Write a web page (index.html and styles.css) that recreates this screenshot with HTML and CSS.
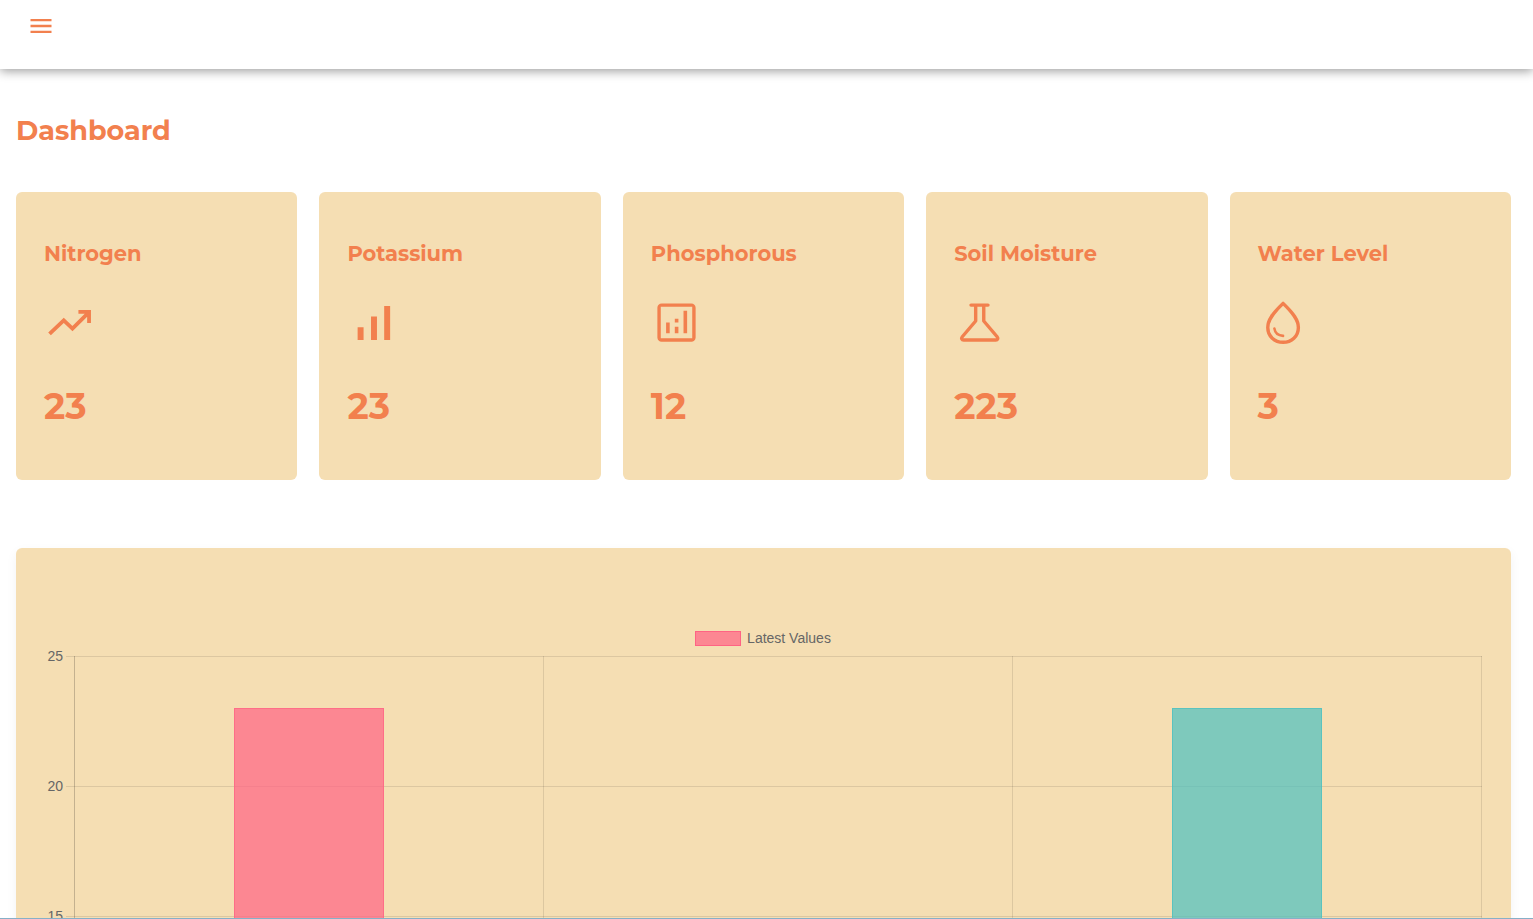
FILE: index.html
```html
<!DOCTYPE html>
<html lang="en">
<head>
<meta charset="utf-8">
<title>Dashboard</title>
<link rel="stylesheet" href="styles.css">
</head>
<body>
<div class="app">
  <header class="topbar">
    <button class="menu-button" type="button" aria-label="Open menu">
      <svg viewBox="0 0 24 24" aria-hidden="true"><path d="M3 18h18v-2H3v2zm0-5h18v-2H3v2zm0-7v2h18V6H3z"/></svg>
    </button>
  </header>
  <main class="content">
    <h1 class="page-title">Dashboard</h1>
    <section class="cards" aria-label="Sensor values">
      <article class="card">
        <h2 class="card-label">Nitrogen</h2>
        <svg class="card-icon" viewBox="0 0 24 24" aria-hidden="true"><path class="stroke sharp" d="M2.600 17.400L9.300 11l4.100 3.900L21.100 7.200M16.200 7h5v5.200"/></svg>
        <p class="card-value">23</p>
      </article>
      <article class="card">
        <h2 class="card-label">Potassium</h2>
        <svg class="card-icon" viewBox="0 0 24 24" aria-hidden="true"><path d="M5 14.200h2.800v6H5zM11.300 9.200h2.800v11h-2.800zM17.500 4.200h2.800v16h-2.800z"/></svg>
        <p class="card-value">23</p>
      </article>
      <article class="card">
        <h2 class="card-label">Phosphorous</h2>
        <svg class="card-icon" viewBox="0 0 24 24" aria-hidden="true"><path d="M19 3H5c-1.100 0-2 .9-2 2v14c0 1.100.9 2 2 2h14c1.100 0 2-.9 2-2V5c0-1.100-.9-2-2-2zm.4 16.400H4.600V4.600h14.800v14.800zM7.100 12h1.700v5H7.100zM15.300 6.500H17V17h-1.700zM11.200 14h1.700v3h-1.700zM11.200 10.200h1.700V12h-1.700z"/></svg>
        <p class="card-value">12</p>
      </article>
      <article class="card">
        <h2 class="card-label">Soil Moisture</h2>
        <svg class="card-icon" viewBox="0 0 24 24" aria-hidden="true"><path class="stroke" d="M8 3.800h8M10.200 3.800v7.500L3.900 18.700c-.6.8-.2 1.500.6 1.500h15.200c.8 0 1.200-.7.6-1.500L14 11.300V3.800"/></svg>
        <p class="card-value">223</p>
      </article>
      <article class="card">
        <h2 class="card-label">Water Level</h2>
        <svg class="card-icon" viewBox="0 0 24 24" aria-hidden="true"><path class="stroke" d="M11.800 3C6.900 7.700 4.600 10.900 4.600 14.300c0 4.200 3.200 7 7.200 7s7.200-2.800 7.200-7C19 10.900 16.700 7.700 11.800 3z"/><path class="stroke thin" d="M7.700 14.800c.3 2.200 1.900 3.400 4.100 3.500"/></svg>
        <p class="card-value">3</p>
      </article>
    </section>
    <section class="chart-panel" aria-label="Latest values chart">
      <div class="legend"><span class="legend-box"></span>Latest Values</div>
      <div class="chart">
        <ol class="axis">
          <li>25</li><li>20</li><li>15</li><li>10</li><li>5</li><li>0</li>
        </ol>
        <div class="ticks"></div>
        <div class="plot">
          <div class="column"><div class="bar bar-pink" style="height:92%"></div></div>
          <div class="column"><div class="bar bar-blue" style="height:48%"></div></div>
          <div class="column"><div class="bar bar-teal" style="height:92%"></div></div>
        </div>
      </div>
    </section>
  </main>
</div>
</body>
</html>
```

FILE: styles.css
```css
:root {
  --accent: #f2804e;
  --panel: #f5deb3;
  --line: rgba(0, 0, 0, 0.1);
  --step: 130px;
}

* {
  box-sizing: border-box;
}

body {
  margin: 0;
  background: #fff;
  color: var(--accent);
  font-family: Montserrat, Inter, sans-serif;
}

.app {
  display: flex;
  flex-direction: column;
  height: 100vh;
  border-bottom: 1px solid #86b0c8;
}

.topbar {
  flex: none;
  z-index: 1;
  padding: 12px 27px 29px;
  box-shadow: 0 2px 10px rgba(0, 0, 0, 0.4);
}

.menu-button {
  display: block;
  padding: 0;
  border: 0;
  background: none;
  color: inherit;
  cursor: pointer;
}

.menu-button svg {
  display: block;
  width: 28px;
  height: 28px;
  fill: currentColor;
}

.content {
  flex: 1;
  min-height: 0;
  padding: 44px 22px 44px 16px;
  overflow-y: auto;
  scrollbar-width: none;
}

.page-title {
  margin: 0 0 44px;
  font-size: 27px;
  line-height: 35px;
  font-weight: 700;
}

.cards {
  display: grid;
  grid-template-columns: repeat(5, 1fr);
  gap: 22px;
  margin-bottom: 68px;
}

.card {
  padding: 48px 28px 52px;
  border-radius: 6px;
  background: var(--panel);
}

.card-label {
  margin: 0 0 29px;
  font-size: 21px;
  line-height: 28px;
  font-weight: 700;
}

.card-icon {
  display: block;
  width: 51px;
  height: 51px;
  margin-bottom: 36px;
  fill: currentColor;
}

.stroke {
  fill: none;
  stroke: currentColor;
  stroke-width: 1.6;
  stroke-linecap: round;
  stroke-linejoin: round;
}

.sharp {
  stroke-width: 1.8;
  stroke-linecap: butt;
  stroke-linejoin: miter;
}

.thin {
  stroke-width: 1.2;
}

.card-value {
  margin: 0;
  font-size: 36px;
  line-height: 44px;
  font-weight: 700;
}

.chart-panel {
  padding: 80px 29px 28px 28px;
  border-radius: 6px;
  background: var(--panel);
  box-shadow: 0 4px 12px rgba(0, 0, 0, 0.05);
  color: #666;
  font: 14px/20px "Liberation Sans", Arial, sans-serif;
}

.legend {
  display: flex;
  align-items: center;
  justify-content: center;
  gap: 6px;
  margin-bottom: 8px;
}

.legend-box {
  width: 46px;
  height: 15px;
  border: 1px solid #ff6384;
  background: rgba(255, 99, 132, 0.7);
}

.chart {
  display: grid;
  grid-template-columns: 22px 8px 1fr;
}

.axis {
  margin: -10px 0 0;
  padding: 0 3px 0 0;
  list-style: none;
  text-align: right;
}

.axis li {
  height: var(--step);
}

.axis li:last-child {
  height: 20px;
}

.ticks,
.plot {
  height: calc(var(--step) * 5 + 1px);
  background: repeating-linear-gradient(var(--line) 0 1px, transparent 1px var(--step));
}

.plot {
  display: grid;
  grid-template-columns: repeat(3, 1fr);
  border-left: 1px solid rgba(0, 0, 0, 0.2);
}

.column {
  display: flex;
  align-items: flex-end;
  justify-content: center;
  border-right: 1px solid var(--line);
}

.bar {
  width: 32%;
  border: 1px solid;
  border-bottom: 0;
}

.bar-pink {
  border-color: rgba(255, 99, 132, 0.7);
  background: rgba(255, 99, 132, 0.7);
}

.bar-blue {
  border-color: rgba(54, 162, 235, 0.7);
  background: rgba(54, 162, 235, 0.7);
}

.bar-teal {
  border-color: rgba(75, 192, 192, 0.7);
  background: rgba(75, 192, 192, 0.7);
}
```
